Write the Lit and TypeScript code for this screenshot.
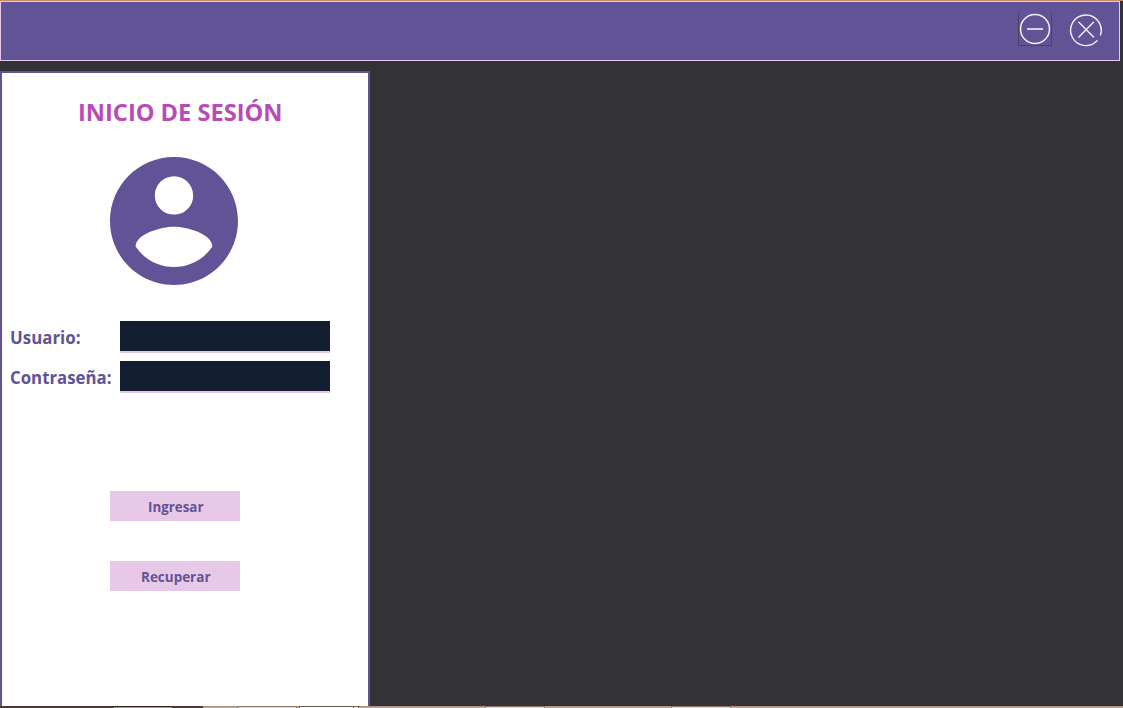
import { LitElement, html, css, svg } from "lit";
import { customElement } from "lit/decorators.js";

@customElement("fit-text")
class FitText extends LitElement {
  static properties = { text: {}, size: { type: Number }, span: { type: Number } };
  declare text: string;
  declare size: number;
  declare span: number;
  static styles = css`
    :host { display: block; line-height: 0; }
    svg { display: block; overflow: visible; }
    text { font-family: "Open Sans", "Noto Sans", sans-serif; font-weight: 700; fill: currentColor; }
  `;
  render() {
    return html`<svg width=${this.span} height=${this.size}>
      ${svg`<text x="0" y=${this.size} font-size=${this.size} textLength=${this.span} lengthAdjust="spacingAndGlyphs">${this.text}</text>`}
    </svg>`;
  }
}

@customElement("app-root")
class AppRoot extends LitElement {
  static styles = css`
    :host { display: flex; flex-direction: column; width: 1123px; height: 708px; background: #333237; overflow: hidden; }
    * { box-sizing: border-box; }
    .edge { height: 1px; flex: none; background: #c98b6b; }
    .bar { width: 1120px; height: 60px; flex: none; background: #615396; border: 1px solid #e8c8e7; display: flex; justify-content: flex-end; gap: 17px; padding: 11px 16px 0 0; }
    .win { padding: 0; border: 0; background: none; width: 34px; height: 34px; }
    .win svg { display: block; }
    .min { border: 1px solid #49425f; border-top: 0; height: 33px; }
    .panel { width: 370px; height: 635px; flex: none; margin-top: 10px; background: #fff; border: 2px solid #615396; border-bottom: 0; color: #615396; display: flex; flex-direction: column; }
    .title { color: #b84cb4; margin: 24px 0 0 76px; }
    .avatar { margin: 36px 0 0 108px; width: 128px; height: 128px; display: block; flex: none; }
    .fields { display: grid; grid-template-columns: 110px 210px; row-gap: 8px; margin: 36px 0 0 8px; }
    .fields fit-text { padding-top: 5px; }
    input { display: block; width: 210px; height: 32px; padding: 0 6px; border: 0; border-bottom: 2px solid #e8c8e7; border-radius: 0; outline: 0; background: #131f31; color: #fff; }
    .actions { display: flex; flex-direction: column; gap: 40px; margin: 98px 0 0 108px; }
    .action { width: 130px; height: 30px; border: 0; padding: 0 0 2px 1px; background: #e8c8e7; color: #615396; display: flex; align-items: center; justify-content: center; }
    .strip { height: 2px; flex: none; display: block; }
  `;
  render() {
    return html`
      <div class="edge"></div>
      <header class="bar">
        <button class="win min" aria-label="Minimizar">
          <svg width="32" height="32" fill="none" stroke="#f3effa" stroke-width="1.5">
            <circle cx="16" cy="16" r="14.5" /><path d="M8 16H24" stroke="#d8d0e6" stroke-width="2" />
          </svg>
        </button>
        <button class="win" aria-label="Cerrar">
          <svg width="34" height="34" fill="none" stroke="#f3effa" stroke-width="1.4" stroke-linecap="round">
            <path transform="translate(.2 -.4)" d="M27.8 28.2A15.3 15.3 0 1 1 31.3 22.3M9.7 9.7 24.3 24.3M24.3 9.7 9.7 24.3" />
          </svg>
        </button>
      </header>
      <main class="panel">
        <fit-text class="title" text="INICIO DE SESIÓN" size="24" span="204.5"></fit-text>
        <svg class="avatar" viewBox="2 2 20 20" fill="#615396">
          <path d="M12 2C6.48 2 2 6.48 2 12s4.48 10 10 10 10-4.48 10-10S17.52 2 12 2zm0 3c1.66 0 3 1.34 3 3s-1.34 3-3 3-3-1.34-3-3 1.34-3 3-3zm0 14.2c-2.5 0-4.71-1.28-6-3.22.03-1.99 4-3.08 6-3.08 1.99 0 5.97 1.09 6 3.08-1.29 1.94-3.5 3.22-6 3.22z" />
        </svg>
        <div class="fields">
          <fit-text text="Usuario:" size="18" span="70.5"></fit-text>
          <input aria-label="Usuario" />
          <fit-text text="Contraseña:" size="18" span="101.5"></fit-text>
          <input type="password" aria-label="Contraseña" />
        </div>
        <div class="actions">
          <button class="action"><fit-text text="Ingresar" size="13.5" span="55.5"></fit-text></button>
          <button class="action"><fit-text text="Recuperar" size="13.5" span="69.5"></fit-text></button>
        </div>
      </main>
      <svg class="strip" width="1123" height="2" shape-rendering="crispEdges">
        <path fill="#4e3a30" d="M0 0h203v2H0z" />
        <path fill="#ad9184" d="M203 0h920v1H203z" />
        <path fill="#c2aa9b" d="M203 1h920v1H203z" />
        <path fill="#302621" d="M114 0h59v1h-59z" />
        <path fill="#a59b95" d="M114 1h58v1h-58z" />
        <path fill="#8c7a70" d="M237 0h60v2h-60zM485 0h60v2h-60zM671 0h60v2h-60z" />
        <path fill="#e0d6d0" d="M238 1h58v1h-58zM486 1h58v1h-58zM672 1h58v1h-58z" />
        <path fill="#695950" d="M299 0h60v2h-60z" />
        <path fill="#fff" d="M300 1h53v1h-53zM354 1h4v1h-4z" />
      </svg>
    `;
  }
}
